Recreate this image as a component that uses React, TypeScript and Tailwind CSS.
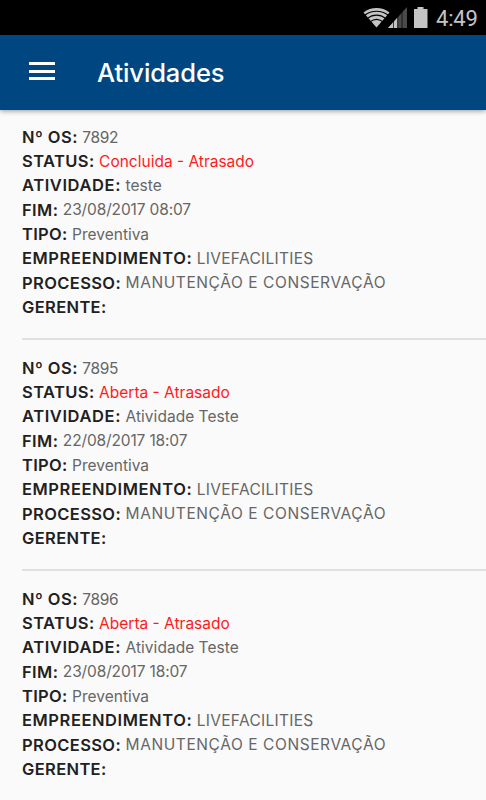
type Activity = {
  os: string
  status: string
  activity: string
  end: string
  type: string
  site: string
  process: string
  manager: string
}

const activities: Activity[] = [
  {
    os: "7892",
    status: "Concluida - Atrasado",
    activity: "teste",
    end: "23/08/2017 08:07",
    type: "Preventiva",
    site: "LIVEFACILITIES",
    process: "MANUTENÇÃO E CONSERVAÇÃO",
    manager: "",
  },
  {
    os: "7895",
    status: "Aberta - Atrasado",
    activity: "Atividade Teste",
    end: "22/08/2017 18:07",
    type: "Preventiva",
    site: "LIVEFACILITIES",
    process: "MANUTENÇÃO E CONSERVAÇÃO",
    manager: "",
  },
  {
    os: "7896",
    status: "Aberta - Atrasado",
    activity: "Atividade Teste",
    end: "23/08/2017 18:07",
    type: "Preventiva",
    site: "LIVEFACILITIES",
    process: "MANUTENÇÃO E CONSERVAÇÃO",
    manager: "",
  },
]

const fields: { key: keyof Activity; label: string; labelClass: string; valueClass: string }[] = [
  { key: "os", label: "Nº OS", labelClass: "tracking-[0.45px]", valueClass: "tracking-[-0.35px] text-[#666]" },
  { key: "status", label: "STATUS", labelClass: "tracking-[0.4px]", valueClass: "text-[#ff1a1a]" },
  { key: "activity", label: "ATIVIDADE", labelClass: "tracking-[0.6px]", valueClass: "tracking-[0.03px] text-[#666]" },
  { key: "end", label: "FIM", labelClass: "tracking-[0.4px]", valueClass: "tracking-[-0.14px] text-[#666]" },
  { key: "type", label: "TIPO", labelClass: "tracking-[0.3px]", valueClass: "text-[#666]" },
  { key: "site", label: "EMPREENDIMENTO", labelClass: "tracking-[0.57px]", valueClass: "tracking-[0.3px] text-[#666]" },
  { key: "process", label: "PROCESSO", labelClass: "tracking-[0.38px]", valueClass: "tracking-[0.58px] text-[#666]" },
  { key: "manager", label: "GERENTE", labelClass: "tracking-[0.35px]", valueClass: "text-[#666]" },
]

function StatusBar() {
  return (
    <div className="flex h-[35px] items-center justify-end bg-black pr-2 text-[#c4c4c4]">
      <svg width="67" height="35" viewBox="0 0 67 35" fill="none">
        {/* wifi */}
        <path d="M0.5 12.4C8 6.6 19 6.6 26.5 12.4L13.5 27.5Z" fill="#c4c4c4" />
        <path
          d="M1.8 15.2C8.5 9.9 18.5 9.9 25.2 15.2M4.4 18.4C10 14 17 14 22.6 18.4M7.2 21.8C11.2 18.7 15.8 18.7 19.8 21.8"
          stroke="#000"
          strokeWidth="1.1"
        />
        {/* signal */}
        <path d="M44 7V28H25Z" fill="#4a4a4a" />
        <path d="M34.5 17.5V28H25Z" fill="#c4c4c4" />
        <path d="M30.5 20V28M34.7 15V28M39 10V28" stroke="#000" strokeWidth="0.7" />
        {/* battery */}
        <path d="M54.5 7h6v2h4v19H51V9h3.5Z" fill="#c4c4c4" />
      </svg>
      <span className="ml-[6px] mt-[2px] w-[42px] font-['Roboto'] text-[22px] leading-none tracking-[-0.2px]">4:49</span>
    </div>
  )
}

export default function App() {
  return (
    <div className="h-[800px] w-[486px] overflow-hidden bg-[#fafafa] font-['Inter',sans-serif]">
      <StatusBar />
      <header className="flex h-[75px] items-center bg-[#004680] pl-[29px] text-white shadow-[0_1px_5px_rgba(0,0,0,0.4)]">
        <button className="mb-[3px] flex h-[18px] w-[26px] flex-col justify-between" aria-label="Menu">
          <span className="h-[3px] bg-white" />
          <span className="h-[3px] bg-white" />
          <span className="h-[3px] bg-white" />
        </button>
        <h1 className="ml-[42px] text-[25.5px] font-medium leading-none tracking-[-0.1px]">Atividades</h1>
      </header>

      <main className="pl-[22px] pt-[15px]">
        {activities.map((a) => (
          <article key={a.os} className="mb-4 h-[215px] border-b-2 border-[#e0e0e0]">
            {fields.map((f) => (
              <div key={f.key} className="flex h-[24.3px] items-center whitespace-nowrap">
                <span className={`mr-[4.5px] text-[16.5px] font-semibold text-[#212121] ${f.labelClass}`}>{f.label}:</span>
                <span className={`text-[15.5px] ${f.valueClass}`}>{a[f.key]}</span>
              </div>
            ))}
          </article>
        ))}
      </main>
    </div>
  )
}
